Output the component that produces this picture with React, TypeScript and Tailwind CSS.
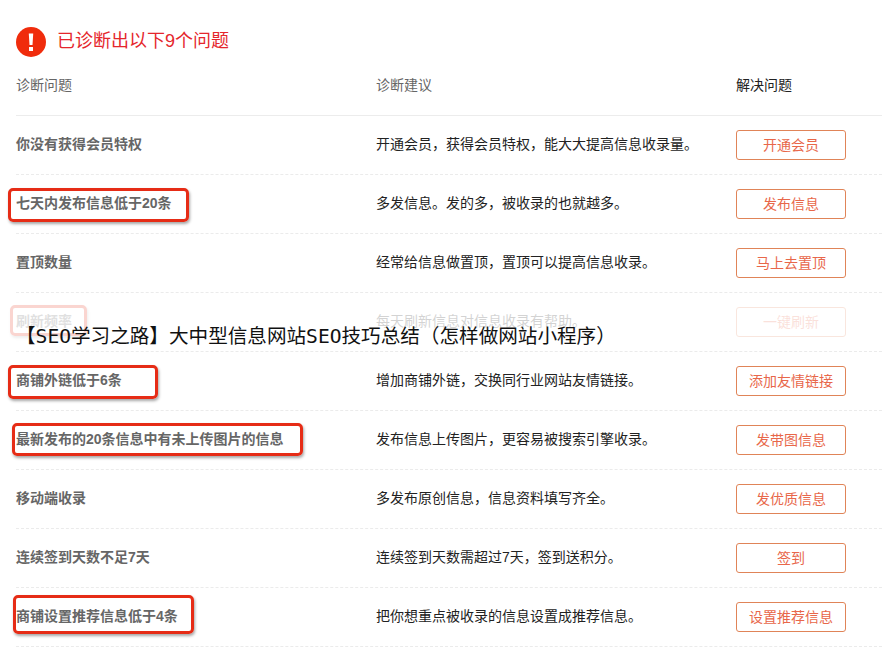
const rows = [
  { problem: "你没有获得会员特权", advice: "开通会员，获得会员特权，能大大提高信息收录量。", action: "开通会员", box: "" },
  { problem: "七天内发布信息低于20条", advice: "多发信息。发的多，被收录的也就越多。", action: "发布信息", box: "top-[13px] left-[8px] w-[181px] h-[34px]" },
  { problem: "置顶数量", advice: "经常给信息做置顶，置顶可以提高信息收录。", action: "马上去置顶", box: "" },
  { problem: "刷新频率", advice: "每天刷新信息对信息收录有帮助。", action: "一键刷新", box: "top-[12px] left-[10px] w-[77px] h-[31px]" },
  { problem: "商铺外链低于6条", advice: "增加商铺外链，交换同行业网站友情链接。", action: "添加友情链接", box: "top-[13px] left-[8px] w-[150px] h-[34px]" },
  { problem: "最新发布的20条信息中有未上传图片的信息", advice: "发布信息上传图片，更容易被搜索引擎收录。", action: "发带图信息", box: "top-[12px] left-[12px] w-[291px] h-[33px]" },
  { problem: "移动端收录", advice: "多发布原创信息，信息资料填写齐全。", action: "发优质信息", box: "" },
  { problem: "连续签到天数不足7天", advice: "连续签到天数需超过7天，签到送积分。", action: "签到", box: "" },
  { problem: "商铺设置推荐信息低于4条", advice: "把你想重点被收录的信息设置成推荐信息。", action: "设置推荐信息", box: "top-[7px] left-[13px] w-[181px] h-[39px]" },
];

function App() {
  return (
    <div className="w-[882px] h-[669px] bg-white overflow-hidden font-['Liberation_Sans','Noto_Sans_CJK_SC',sans-serif] text-sm">
      <div className="flex items-center gap-[11px] pl-4 pt-[26px] h-[57px]">
        <svg width="30" height="30" viewBox="0 0 30 30">
          <circle cx="15" cy="15" r="15" fill="#f02c0c" />
          <path d="M12.8 6.5h4.4l-.7 11.5h-3z" fill="#fff" />
          <rect x="13" y="20" width="4" height="4" fill="#fff" />
        </svg>
        <span className="text-[18px] text-[#e5262c]">已诊断出以下9个问题</span>
      </div>
      <div className="grid grid-cols-[360px_360px_1fr] items-center h-[59px] ml-4 pb-[2px] border-b border-[#ececec] text-[#666]">
        <span>诊断问题</span>
        <span>诊断建议</span>
        <span className="text-[#222]">解决问题</span>
      </div>
      {rows.map((row, i) => (
        <div key={i} className="relative grid grid-cols-[360px_360px_1fr] items-center h-[59px] ml-4 border-b border-dashed border-[#ebebeb]">
          <span className="pb-[2px] font-semibold text-[#666]">{row.problem}</span>
          <span className="pb-[2px] text-[#222]">{row.advice}</span>
          <button className="w-[110px] h-[30px] pb-[1px] rounded-[3px] border border-[#e08458] text-[#e8674a] bg-white">{row.action}</button>
          {row.box && (
            <div className={`absolute -ml-4 rounded-[5px] border-[3px] border-[#e62c16] shadow-[1px_2px_3px_rgba(0,0,0,0.35)] ${row.box}`} />
          )}
          {i === 3 && (
            <div className="absolute -left-4 right-0 top-[5px] h-[52px] bg-white/80">
              <div className="absolute left-4 top-[24px] whitespace-nowrap text-[19.6px] leading-[30px] text-[#111] font-['DejaVu_Sans_Mono','Noto_Sans_CJK_SC',monospace]">
                【SEO学习之路】大中型信息网站SEO技巧总结（怎样做网站小程序）
              </div>
            </div>
          )}
        </div>
      ))}
    </div>
  );
}

export default App;
